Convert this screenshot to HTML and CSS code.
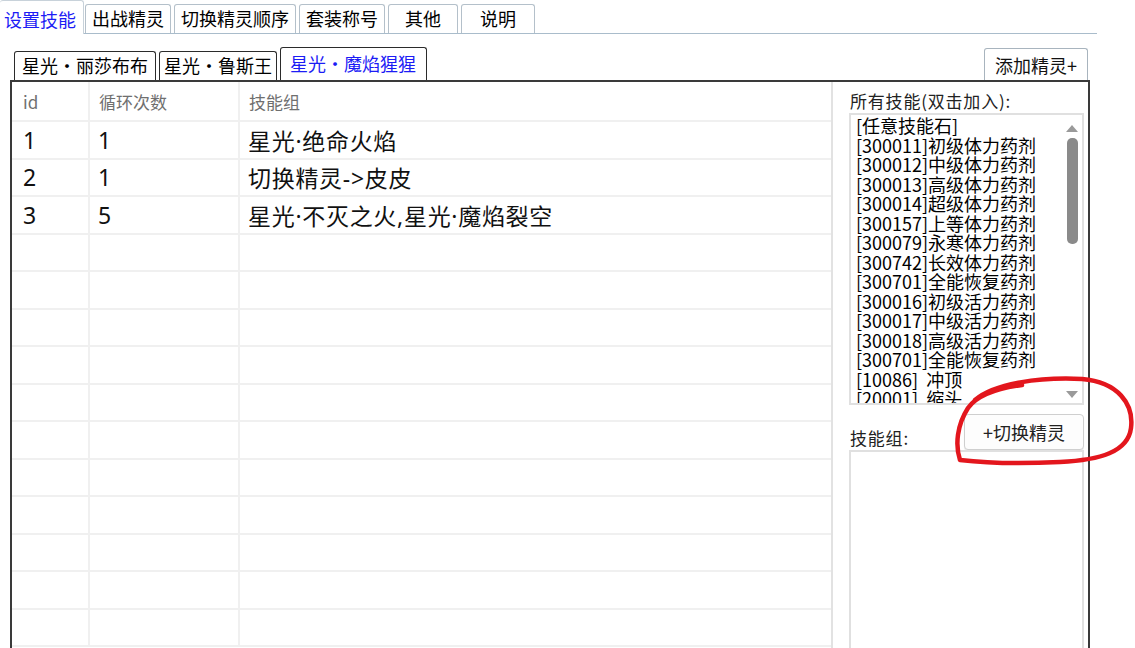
FILE: index.html
```html
<!DOCTYPE html>
<html lang="zh-CN">
<head>
<meta charset="utf-8">
<title>设置技能</title>
<link rel="stylesheet" href="styles.css">
</head>
<body>
<div class="app">
  <div class="tabbar">
    <div class="tab active">设置技能</div>
    <div class="tab">出战精灵</div>
    <div class="tab">切换精灵顺序</div>
    <div class="tab">套装称号</div>
    <div class="tab wide">其他</div>
    <div class="tab wide2">说明</div>
  </div>

  <div class="page">
    <div class="subbar">
      <div class="subtab first">星光・丽莎布布</div>
      <div class="subtab">星光・鲁斯王</div>
      <div class="subtab active">星光・魔焰猩猩</div>
      <button class="add-btn">添加精灵+</button>
    </div>

    <div class="panel">
      <div class="grid">
        <table class="skills">
          <colgroup>
            <col class="c-id">
            <col class="c-loop">
            <col class="c-group">
          </colgroup>
          <thead>
            <tr><th>id</th><th>循环次数</th><th>技能组</th></tr>
          </thead>
          <tbody>
            <tr><td>1</td><td>1</td><td>星光·绝命火焰</td></tr>
            <tr><td>2</td><td>1</td><td>切换精灵-&gt;皮皮</td></tr>
            <tr><td>3</td><td>5</td><td>星光·不灭之火,星光·魔焰裂空</td></tr>
            <tr><td></td><td></td><td></td></tr>
            <tr><td></td><td></td><td></td></tr>
            <tr><td></td><td></td><td></td></tr>
            <tr><td></td><td></td><td></td></tr>
            <tr><td></td><td></td><td></td></tr>
            <tr><td></td><td></td><td></td></tr>
            <tr><td></td><td></td><td></td></tr>
            <tr><td></td><td></td><td></td></tr>
            <tr><td></td><td></td><td></td></tr>
            <tr><td></td><td></td><td></td></tr>
            <tr><td></td><td></td><td></td></tr>
          </tbody>
        </table>
      </div>

      <div class="side">
        <div class="label">所有技能(双击加入):</div>
        <div class="listbox">
          <ul class="items">
            <li>[任意技能石]</li>
            <li>[300011]初级体力药剂</li>
            <li>[300012]中级体力药剂</li>
            <li>[300013]高级体力药剂</li>
            <li>[300014]超级体力药剂</li>
            <li>[300157]上等体力药剂</li>
            <li>[300079]永寒体力药剂</li>
            <li>[300742]长效体力药剂</li>
            <li>[300701]全能恢复药剂</li>
            <li>[300016]初级活力药剂</li>
            <li>[300017]中级活力药剂</li>
            <li>[300018]高级活力药剂</li>
            <li>[300701]全能恢复药剂</li>
            <li>[10086]&nbsp; 冲顶</li>
            <li>[20001]&nbsp; 缩头</li>
          </ul>
          <div class="scrollbar">
            <svg class="arrow" width="14" height="9" viewBox="0 0 14 9"><path d="M1 8 L7 1 L13 8 Z" fill="#9a9a9a"/></svg>
            <div class="track"><div class="thumb"></div></div>
            <svg class="arrow" width="14" height="9" viewBox="0 0 14 9"><path d="M1 1 L7 8 L13 1 Z" fill="#9a9a9a"/></svg>
          </div>
        </div>
        <div class="group-row">
          <div class="label">技能组:</div>
          <button class="switch-btn">+切换精灵</button>
        </div>
        <div class="groupbox"></div>
      </div>
    </div>
  </div>

  <svg class="mark" width="1135" height="648" viewBox="0 0 1135 648">
    <path d="M975 400 C 995 383, 1040 377, 1082 379 C 1118 382, 1134 404, 1131 428 C 1128 452, 1100 460, 1060 462 C 1020 464, 985 463, 960 460 C 955 445, 957 425, 968 408 C 978 394, 1000 388, 1022 385" fill="none" stroke="#e3161d" stroke-width="4.5" stroke-linecap="round" stroke-linejoin="round"/>
  </svg>
</div>
</body>
</html>
```

FILE: styles.css
```css
* { box-sizing: border-box; }

html, body {
  margin: 0;
  padding: 0;
  background: #ffffff;
}

body {
  width: 1135px;
  height: 648px;
  overflow: hidden;
  font-family: "Noto Sans CJK SC", "Noto Sans", sans-serif;
  color: #000;
}

.app {
  position: relative;
  width: 1135px;
  height: 648px;
}

/* top tab strip */
.tabbar {
  display: flex;
  align-items: flex-end;
  height: 34px;
  width: 1097px;
  border-bottom: 1px solid #a9bccb;
}

.tab {
  height: 29px;
  padding: 0 6px;
  margin-right: 3px;
  border: 1px solid #b4c0ca;
  border-bottom: none;
  border-radius: 3px 3px 0 0;
  font-size: 18px;
  line-height: 27px;
  text-align: center;
  background: #fff;
}

.tab.wide { min-width: 70px; }
.tab.wide2 { min-width: 74px; }

.tab.active {
  height: 34px;
  width: 84px;
  margin-bottom: -1px;
  margin-right: 1px;
  border-left: none;
  color: #1c1cf5;
  line-height: 36px;
  padding: 0 4px;
  text-align: left;
  border-color: #c8d2da;
}

/* sub tabs */
.page {
  padding-left: 10px;
}

.subbar {
  display: flex;
  align-items: flex-end;
  height: 46px;
  width: 1080px;
  padding-left: 4px;
}

.subtab {
  height: 29px;
  padding: 0 4px;
  margin-right: 3px;
  border: 1px solid #2b2b2b;
  border-bottom: none;
  border-radius: 3px 3px 0 0;
  font-size: 18px;
  line-height: 27px;
  background: #fff;
}

.subtab.first {
  padding: 0 7px;
}

.subtab.active {
  height: 33px;
  color: #1c1cf5;
  line-height: 30px;
  padding: 0 10px 0 9px;
}

.add-btn {
  margin-left: auto;
  margin-right: 2px;
  height: 32px;
  width: 104px;
  padding: 0;
  border: 1px solid #a8b4be;
  border-bottom: none;
  border-radius: 3px 3px 0 0;
  background: #fff;
  font-family: inherit;
  font-size: 18px;
  line-height: 30px;
  color: #111;
}

/* main panel */
.panel {
  display: flex;
  width: 1080px;
  height: 580px;
  border: 2px solid #3a3a3a;
  border-bottom: none;
}

.grid {
  width: 821px;
  border-right: 2px solid #e2e2e2;
  overflow: hidden;
}

.skills {
  width: 819px;
  border-collapse: collapse;
  table-layout: fixed;
}

.c-id { width: 77px; }
.c-loop { width: 150px; }
.c-group { width: auto; }

.skills th {
  height: 39px;
  padding: 0 0 0 9px;
  font-size: 17px;
  font-weight: normal;
  color: #6f6f6f;
  text-align: left;
  border-left: 2px solid #f0f0f0;
  border-bottom: 2px solid #f0f0f0;
}

.skills th:first-child,
.skills td:first-child { border-left: none; padding-left: 11px; }

.skills td {
  height: 37.5px;
  padding: 0 0 0 8px;
  font-family: "Noto Sans", "Noto Sans CJK SC", sans-serif;
  font-size: 23px;
  letter-spacing: 0.7px;
  color: #111;
  white-space: nowrap;
  border-left: 2px solid #f0f0f0;
  border-bottom: 2px solid #f0f0f0;
}

/* side panel */
.side {
  width: 255px;
  padding-left: 16px;
  padding-top: 8px;
  display: flex;
  flex-direction: column;
}

.label {
  font-size: 17px;
  line-height: 21px;
  letter-spacing: 0.8px;
  color: #222;
  height: 23px;
  padding-left: 1px;
}

.listbox {
  display: flex;
  width: 235px;
  height: 292px;
  border: 2px solid #e0e0e0;
  overflow: hidden;
}

.items {
  flex: 1;
  list-style: none;
  margin: 0;
  padding: 1px 0 0 5px;
  font-size: 18px;
  line-height: 19.5px;
  color: #000;
  white-space: nowrap;
  overflow: hidden;
}

.scrollbar {
  width: 18px;
  display: flex;
  flex-direction: column;
  align-items: center;
  padding: 9px 2px 4px 0;
}

.arrow { display: block; }

.track {
  flex: 1;
  padding-top: 5px;
}

.thumb {
  width: 11px;
  height: 106px;
  border-radius: 5px;
  background: #8a8a8a;
}

.group-row {
  display: flex;
  align-items: flex-end;
  justify-content: space-between;
  width: 235px;
  margin-top: 9px;
  height: 36px;
}

.group-row .label {
  height: auto;
  margin-bottom: 2px;
}

.switch-btn {
  width: 120px;
  height: 36px;
  padding: 0;
  border: 1px solid #cfcfcf;
  border-radius: 4px;
  background: #fdfdfd;
  font-family: inherit;
  font-size: 18px;
  color: #222;
  box-shadow: 0 1px 1px rgba(0,0,0,0.08);
}

.groupbox {
  width: 235px;
  flex: 1;
  border: 2px solid #e0e0e0;
  border-bottom: none;
}

/* hand-drawn annotation overlay */
.mark {
  position: absolute;
  left: 0;
  top: 0;
  pointer-events: none;
}
```
